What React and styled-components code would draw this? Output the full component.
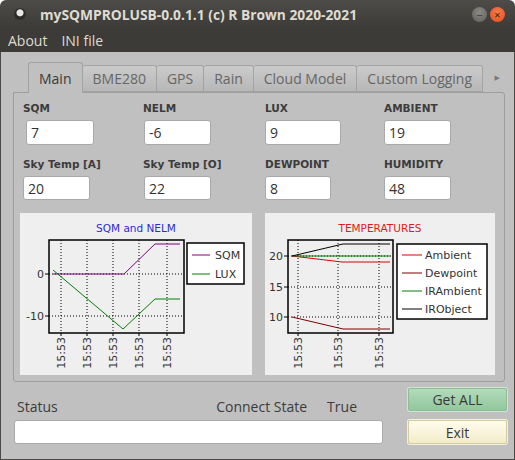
import React from 'react';
import styled, { createGlobalStyle } from 'styled-components';

const GlobalStyle = createGlobalStyle`
  html, body {
    margin: 0;
    padding: 0;
    background: #fff;
    overflow: hidden;
  }
  * { box-sizing: border-box; }
`

const Window = styled.div`
  display: flex;
  flex-direction: column;
  width: 515px;
  height: 460px;
  font-family: "Open Sans", "DejaVu Sans", sans-serif;
`

const TitleBar = styled.div`
  display: flex;
  align-items: center;
  height: 28px;
  padding: 0 10px 0 14px;
  border-radius: 6px 6px 0 0;
  background: linear-gradient(#4d4c48, #3c3b37);
`

const AppDot = styled.div`
  width: 12px;
  height: 12px;
  border-radius: 50%;
  background: radial-gradient(circle at 50% 40%, #e8e8e8 0 3px, #2d2c29 4px);
`

const Title = styled.div`
  margin-left: 14px;
  color: #dfdbd2;
  font-size: 13.8px;
  font-weight: 700;
`

const WinButtons = styled.div`
  display: flex;
  gap: 3px;
  margin-left: auto;
`

const WinButton = styled.div`
  display: flex;
  align-items: center;
  justify-content: center;
  width: 15px;
  height: 15px;
  border-radius: 50%;
  font-size: 11px;
  line-height: 1;
  color: ${p => (p.$close ? '#4a1a08' : '#3c3b37')};
  background: ${p => (p.$close
    ? 'radial-gradient(circle at 50% 35%, #f47a4d, #e4501b)'
    : 'radial-gradient(circle at 50% 35%, #8a8984, #5f5e5a)')};
`

const MenuBar = styled.div`
  display: flex;
  align-items: center;
  height: 24px;
  padding-left: 1px;
  background: #3c3b37;
`

const MenuItem = styled.div`
  padding: 0 7px;
  color: #dfdbd2;
  font-size: 14px;
`

const Body = styled.div`
  flex: 1;
  display: flex;
  flex-direction: column;
  padding: 10px 7px 0 12px;
  background: #c0c0c0;
  border: 1px solid #4a4945;
  border-top: none;
`

const TabWidget = styled.div`
  display: flex;
  flex-direction: column;
  margin-right: 2px;
`

const TabBar = styled.div`
  display: flex;
  align-items: flex-end;
  height: 30px;
  padding: 0 5px 0 15px;
`

const Tab = styled.div`
  display: flex;
  align-items: center;
  justify-content: center;
  height: ${p => (p.$active ? '31px' : '27px')};
  margin-bottom: ${p => (p.$active ? '-1px' : '0')};
  padding: 0 10px;
  border: 1px solid #a3a3a3;
  border-bottom: ${p => (p.$active ? 'none' : '1px solid #a3a3a3')};
  border-left: ${p => (p.$first ? '1px solid #a3a3a3' : 'none')};
  border-radius: 3px 3px 0 0;
  background: ${p => (p.$active ? '#c0c0c0' : 'linear-gradient(#cbcbcb, #b7b7b7)')};
  color: ${p => (p.$active ? '#3a3a3a' : '#666')};
  font-size: 14px;
  position: relative;
  z-index: ${p => (p.$active ? 1 : 0)};
`

const TabScroll = styled.div`
  margin-left: auto;
  align-self: center;
  color: #7a7a7a;
  font-size: 7px;
`

const Pane = styled.div`
  display: flex;
  flex-direction: column;
  height: 290px;
  padding: 8px 9px 0 6px;
  border: 1px solid #9e9e9e;
  border-radius: 0 3px 3px 3px;
`

const Fields = styled.div`
  display: grid;
  grid-template-columns: 120px 122px 119px 1fr;
  row-gap: 12px;
  margin-left: 3px;
`

const Field = styled.div`
  display: flex;
  flex-direction: column;
`

const FieldLabel = styled.div`
  height: 14px;
  margin-bottom: 5px;
  color: #3c3c3c;
  font-family: "DejaVu Sans", sans-serif;
  font-size: 10.5px;
  font-weight: 700;
  line-height: 14px;
`

const ValueBox = styled.div`
  width: ${p => p.$w}px;
  height: ${p => p.$h || 25}px;
  margin-left: ${p => p.$offset || 0}px;
  padding-left: 4px;
  border: 1px solid #a9a9a9;
  border-radius: 3px;
  background: #fff;
  color: #333;
  font-size: 14px;
  line-height: 23px;
`

const Charts = styled.div`
  display: flex;
  gap: 13px;
  margin-top: 13px;
`

const ChartPanel = styled.div`
  width: ${p => p.$w}px;
  height: 162px;
  background: #efefef;
`

const Bottom = styled.div`
  display: grid;
  grid-template-columns: 1fr 99px;
  grid-template-rows: 23px 24px;
  column-gap: 25px;
  row-gap: 9px;
  margin-top: 6px;
  padding-left: 1px;
`

const StatusLine = styled.div`
  display: flex;
  padding: 9px 26px 0 3px;
  color: #3c3c3c;
  font-size: 14px;
  line-height: 19px;
  white-space: nowrap;
`

const ConnectLabel = styled.span`
  margin-left: auto;
  margin-right: 20px;
`

const StatusBox = styled.div`
  height: 24px;
  border: 1px solid #a9a9a9;
  border-radius: 3px;
  background: #fff;
`

const Button = styled.div`
  display: flex;
  align-items: center;
  justify-content: center;
  border: 1px solid ${p => (p.$tone === 'green' ? '#8fbd98' : '#d5cc9f')};
  box-shadow: 0 0 0 1px ${p => (p.$tone === 'green' ? '#cfe5d2' : '#f3f0de')};
  border-radius: 2px;
  background: ${p => (p.$tone === 'green'
    ? 'linear-gradient(#b3dbbb, #92c79d)'
    : 'linear-gradient(#fffcec, #f3ecca)')};
  color: #3a3a3a;
  font-size: 14px;
`

const sqmChart = {
  w: 232,
  title: 'SQM and NELM',
  titleColor: '#2a2ae0',
  titleX: 116,
  plot: { x: 29, y: 27, w: 135, h: 93 },
  yTicks: [{ label: '0', y: 61 }, { label: '-10', y: 103 }],
  xTicks: [41, 67, 93, 119, 147],
  series: [
    { name: 'SQM', color: '#800080', pts: [[33, 61], [104, 61], [135, 31], [160, 31]] },
    { name: 'LUX', color: '#008000', pts: [[33, 57], [103, 116], [135, 86], [160, 86]] },
  ],
  legend: { x: 167, y: 30, w: 57, h: 41, first: 42, step: 19, lineX: 172, lineW: 18, textX: 195 },
}

const tempChart = {
  w: 230,
  title: 'TEMPERATURES',
  titleColor: '#e41a1a',
  titleX: 115,
  plot: { x: 23, y: 27, w: 105, h: 93 },
  yTicks: [{ label: '20', y: 43 }, { label: '15', y: 74 }, { label: '10', y: 104 }],
  xTicks: [33, 73, 114],
  series: [
    { name: 'Ambient', color: '#e00000', pts: [[27, 43], [77, 49], [125, 49]] },
    { name: 'Dewpoint', color: '#800000', pts: [[27, 104], [78, 116], [125, 116]] },
    { name: 'IRAmbient', color: '#008000', pts: [[27, 43], [125, 43]] },
    { name: 'IRObject', color: '#000000', pts: [[27, 43], [78, 31], [125, 31]] },
  ],
  legend: { x: 132, y: 31, w: 90, h: 75, first: 42, step: 18, lineX: 137, lineW: 20, textX: 160 },
}

const Chart = ({ cfg }) => {
  const { plot, legend } = cfg
  const bottom = plot.y + plot.h
  return (
    <ChartPanel $w={cfg.w}>
      <svg width={cfg.w} height="162" fontFamily="DejaVu Sans, sans-serif" fontSize="11">
        <text x={cfg.titleX} y="19" textAnchor="middle" fill={cfg.titleColor} fontSize="10.5">
          {cfg.title}
        </text>
        {cfg.yTicks.map(t => (
          <g key={t.label}>
            <line x1={plot.x} x2={plot.x + plot.w} y1={t.y} y2={t.y} stroke="#000" strokeDasharray="1 2" />
            <line x1={plot.x - 4} x2={plot.x} y1={t.y} y2={t.y} stroke="#000" />
            <text x={plot.x - 5} y={t.y + 4} textAnchor="end" fill="#333">{t.label}</text>
          </g>
        ))}
        {cfg.xTicks.map(x => (
          <g key={x}>
            <line x1={x} x2={x} y1={plot.y} y2={bottom} stroke="#000" strokeDasharray="1 2" />
            <line x1={x} x2={x} y1={bottom} y2={bottom + 3} stroke="#000" />
            <text transform={`translate(${x + 4} ${bottom + 4}) rotate(-90)`} textAnchor="end" fill="#333">
              15:53
            </text>
          </g>
        ))}
        {cfg.series.map(s => (
          <polyline key={s.name} points={s.pts.map(p => p.join(',')).join(' ')} fill="none" stroke={s.color} strokeWidth="1" />
        ))}
        <rect x={plot.x} y={plot.y} width={plot.w} height={plot.h} fill="none" stroke="#000" strokeWidth="1.5" />
        <rect x={legend.x} y={legend.y} width={legend.w} height={legend.h} fill="#fff" stroke="#000" strokeWidth="1.5" />
        {cfg.series.map((s, i) => {
          const y = legend.first + i * legend.step
          return (
            <g key={s.name}>
              <line x1={legend.lineX} x2={legend.lineX + legend.lineW} y1={y} y2={y} stroke={s.color} />
              <text x={legend.textX} y={y + 4} fill="#333">{s.name}</text>
            </g>
          )
        })}
      </svg>
    </ChartPanel>
  )
}

const fields = [
  { label: 'SQM', value: '7', w: 68, offset: 3 },
  { label: 'NELM', value: '-6', w: 67, offset: 1 },
  { label: 'LUX', value: '9', w: 76 },
  { label: 'AMBIENT', value: '19', w: 67 },
  { label: 'Sky Temp [A]', value: '20', w: 67, h: 24 },
  { label: 'Sky Temp [O]', value: '22', w: 67, offset: 1, h: 24 },
  { label: 'DEWPOINT', value: '8', w: 66, h: 24 },
  { label: 'HUMIDITY', value: '48', w: 67, h: 24 },
]

const tabs = ['Main', 'BME280', 'GPS', 'Rain', 'Cloud Model', 'Custom Logging']

const App = () => {
  return (
    <Window>
      <GlobalStyle />
      <TitleBar>
        <AppDot />
        <Title>mySQMPROLUSB-0.0.1.1 (c) R Brown 2020-2021</Title>
        <WinButtons>
          <WinButton>&#8722;</WinButton>
          <WinButton $close>&#215;</WinButton>
        </WinButtons>
      </TitleBar>
      <MenuBar>
        <MenuItem>About</MenuItem>
        <MenuItem>INI file</MenuItem>
      </MenuBar>
      <Body>
        <TabWidget>
          <TabBar>
            {tabs.map((t, i) => (
              <Tab key={t} $active={i === 0} $first={i === 0}>{t}</Tab>
            ))}
            <TabScroll>&#9654;</TabScroll>
          </TabBar>
          <Pane>
            <Fields>
              {fields.map(f => (
                <Field key={f.label}>
                  <FieldLabel>{f.label}</FieldLabel>
                  <ValueBox $w={f.w} $h={f.h} $offset={f.offset}>{f.value}</ValueBox>
                </Field>
              ))}
            </Fields>
            <Charts>
              <Chart cfg={sqmChart} />
              <Chart cfg={tempChart} />
            </Charts>
          </Pane>
        </TabWidget>
        <Bottom>
          <StatusLine>
            <span>Status</span>
            <ConnectLabel>Connect State</ConnectLabel>
            <span>True</span>
          </StatusLine>
          <Button $tone="green">Get ALL</Button>
          <StatusBox />
          <Button $tone="cream">Exit</Button>
        </Bottom>
      </Body>
    </Window>
  )
}

export default App;
